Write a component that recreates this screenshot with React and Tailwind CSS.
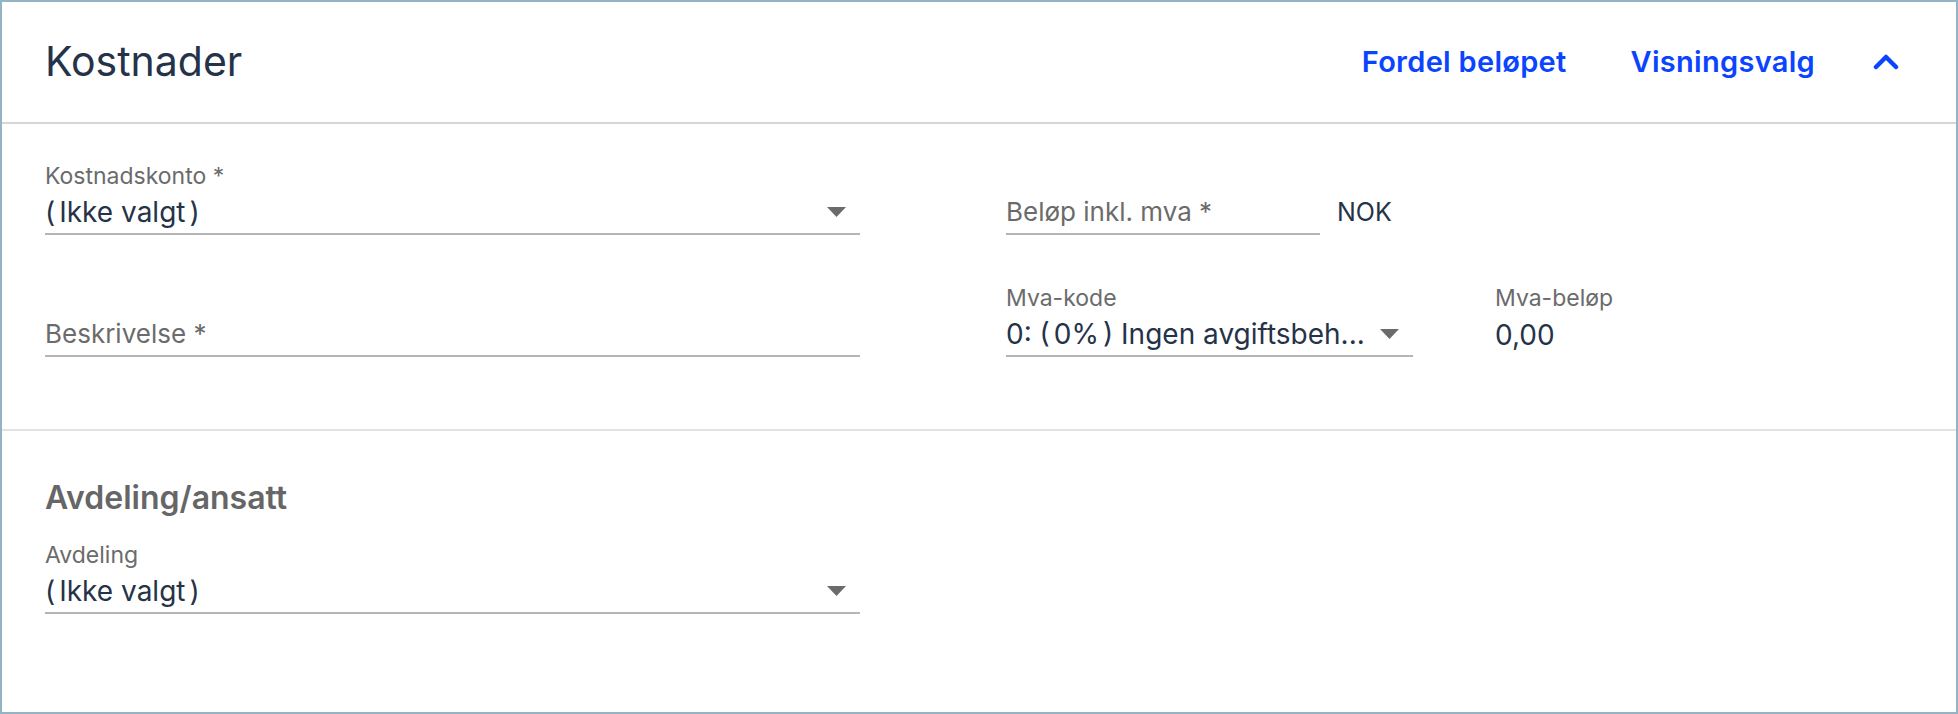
import React from 'react';

const Caret = () => (
    <svg width="19" height="10" viewBox="0 0 19 10" className="shrink-0">
        <path d="M0 0 L19 0 L9.5 10 Z" fill="#6b6b6b" />
    </svg>
);

const ChevronUp = () => (
    <svg width="26" height="18" viewBox="0 0 26 18" fill="none">
        <path d="M3 14 L13 4 L23 14" stroke="#0b44ff" strokeWidth="4.5" strokeLinecap="round" strokeLinejoin="round" />
    </svg>
);

const Spaced = ({ text }) =>
    text.split(/([()])/).map((part, i) =>
        part === '(' ? <span key={i} className="mr-[4px]">(</span>
        : part === ')' ? <span key={i} className="ml-[4px]">)</span>
        : part
    );

const SelectField = ({ label, value, className = '' }) => (
    <div className={className}>
        <div className="h-[28px] text-[23px] leading-[28px] text-[#6b6b6b]">{label}</div>
        <div className="h-[43px] flex items-center justify-between pr-[14px] border-b-2 border-[#b5b5b5] box-content">
            <span className="text-[28px] text-[#253349] truncate"><Spaced text={value} /></span>
            <Caret />
        </div>
    </div>
);

const TextField = ({ placeholder, className = '' }) => (
    <div className={`h-[43px] flex items-center border-b-2 border-[#b5b5b5] box-content ${className}`}>
        <span className="text-[26px] text-[#6b6b6b]">{placeholder}</span>
    </div>
);

const App = () => {
    return (
        <div className="w-[1958px] h-[714px] bg-white border-2 border-[#93b4c4] flex flex-col font-['Inter',sans-serif]">
            {/* Header */}
            <header className="h-[122px] shrink-0 flex items-center justify-between pl-[43px] pr-[57px] border-b-2 border-[#d6d6d6]">
                <h1 className="text-[41px] font-normal text-[#253349]">Kostnader</h1>
                <div className="flex items-center">
                    <button className="text-[29px] tracking-[0.01em] font-semibold text-[#0b44ff]">Fordel beløpet</button>
                    <button className="ml-[64px] text-[29px] tracking-[0.01em] font-semibold text-[#0b44ff]">Visningsvalg</button>
                    <button className="ml-[58px]"><ChevronUp /></button>
                </div>
            </header>

            {/* Kostnader fields */}
            <section className="h-[307px] shrink-0 px-[43px] pt-[38px] border-b-2 border-[#e2e2e2] flex">
                <div className="w-[815px] flex flex-col gap-[49px]">
                    <SelectField label="Kostnadskonto *" value="(Ikke valgt)" />
                    <div className="h-[73px] flex flex-col justify-end">
                        <TextField placeholder="Beskrivelse *" />
                    </div>
                </div>
                <div className="ml-[146px] flex flex-col gap-[49px]">
                    <div className="h-[73px] flex items-end">
                        <TextField placeholder="Beløp inkl. mva *" className="w-[314px]" />
                        <span className="ml-[17px] h-[45px] flex items-center text-[25px] text-[#253349]">NOK</span>
                    </div>
                    <div className="flex items-end">
                        <SelectField label="Mva-kode" value="0: (0%) Ingen avgiftsbeh..." className="w-[407px]" />
                        <div className="ml-[82px]">
                            <div className="h-[28px] text-[23px] leading-[28px] text-[#6b6b6b]">Mva-beløp</div>
                            <div className="h-[45px] flex items-center text-[28px] text-[#253349]">0,00</div>
                        </div>
                    </div>
                </div>
            </section>

            {/* Avdeling/ansatt */}
            <section className="px-[43px] pt-[48px]">
                <h2 className="text-[32px] leading-[38px] font-semibold text-[#666666]">Avdeling/ansatt</h2>
                <SelectField label="Avdeling" value="(Ikke valgt)" className="w-[815px] mt-[24px]" />
            </section>
        </div>
    );
};

export default App;
